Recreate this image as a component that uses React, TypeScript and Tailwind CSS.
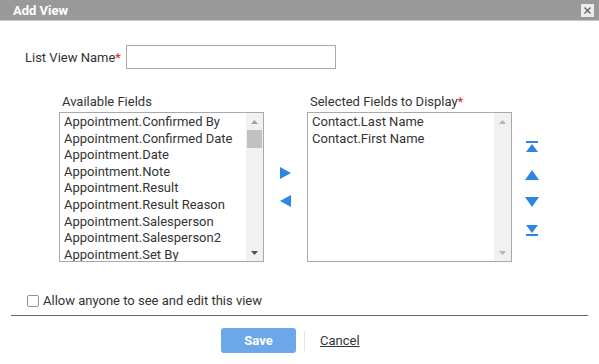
import React from "react";

const available = [
  "Appointment.Confirmed By",
  "Appointment.Confirmed Date",
  "Appointment.Date",
  "Appointment.Note",
  "Appointment.Result",
  "Appointment.Result Reason",
  "Appointment.Salesperson",
  "Appointment.Salesperson2",
  "Appointment.Set By",
];

const selected = ["Contact.Last Name", "Contact.First Name"];

function Tri({ dir, color }: { dir: "up" | "down"; color: string }) {
  return (
    <svg width="7" height="4" viewBox="0 0 7 4">
      {dir === "up" ? (
        <polygon points="0,4 7,4 3.5,0" fill={color} />
      ) : (
        <polygon points="0,0 7,0 3.5,4" fill={color} />
      )}
    </svg>
  );
}

function ListBox({
  items,
  thumb,
  upColor,
  downColor,
}: {
  items: string[];
  thumb: boolean;
  upColor: string;
  downColor: string;
}) {
  return (
    <div className="flex w-[205px] h-[150px] border border-[#a9a9a9] bg-white overflow-hidden">
      <div className="flex-1 pl-[4px] pt-[1px] overflow-hidden">
        {items.map((t) => (
          <div key={t} className="leading-[16.6px] whitespace-nowrap text-[13px] text-[#333]">
            {t}
          </div>
        ))}
      </div>
      <div className="w-[17px] h-full bg-[#f1f1f1] flex flex-col items-center">
        <div className="h-[17px] flex items-center justify-center">
          <Tri dir="up" color={upColor} />
        </div>
        {thumb ? <div className="w-[15px] h-[18px] bg-[#c1c1c1]" /> : null}
        <div className="flex-1" />
        <div className="h-[17px] flex items-center justify-center">
          <Tri dir="down" color={downColor} />
        </div>
      </div>
    </div>
  );
}

const BLUE = "#2e86de";

export default function App() {
  return (
    <div
      className="w-[599px] h-[364px] bg-white text-[13px] text-[#333] overflow-hidden"
      style={{ fontFamily: "Roboto, 'Liberation Sans', sans-serif" }}
    >
      {/* Title bar */}
      <div className="h-[21px] bg-[#999999] border-b border-[#c8c8c8] flex items-center justify-between pl-[13px] pr-[5px]">
        <span className="text-white font-bold text-[13px] leading-none">Add View</span>
        <div className="w-[13px] h-[13px] bg-[#ececec] flex items-center justify-center">
          <svg width="7" height="7" viewBox="0 0 7 7">
            <path d="M0.5 0.5 L6.5 6.5 M6.5 0.5 L0.5 6.5" stroke="#666" strokeWidth="1.4" />
          </svg>
        </div>
      </div>

      {/* Name row */}
      <div className="flex items-center pl-[25px] mt-[24px]">
        <span className="leading-none">
          List View Name<span className="text-[#e0261b]">*</span>
        </span>
        <div className="ml-[5px] w-[210px] h-[24px] border border-[#a9a9a9] bg-white" />
      </div>

      {/* Lists */}
      <div className="flex pl-[59px] mt-[25px]">
        <div className="flex flex-col">
          <div className="pl-[3px] h-[18px] leading-[16px]">Available Fields</div>
          <ListBox items={available} thumb upColor="#a3a3a3" downColor="#505050" />
        </div>
        <div className="w-[43px] flex flex-col items-center pt-[73px] gap-[16px]">
          <svg width="11" height="12" viewBox="0 0 11 12">
            <polygon points="0,0 11,6 0,12" fill={BLUE} />
          </svg>
          <svg width="11" height="12" viewBox="0 0 11 12">
            <polygon points="11,0 0,6 11,12" fill={BLUE} />
          </svg>
        </div>
        <div className="flex flex-col">
          <div className="pl-[3px] h-[18px] leading-[16px]">
            Selected Fields to Display<span className="text-[#e0261b]">*</span>
          </div>
          <ListBox items={selected} thumb={false} upColor="#b5b5b5" downColor="#b5b5b5" />
        </div>
        <div className="flex flex-col pl-[13px] pt-[47px] gap-[17px]">
          <svg width="14" height="11" viewBox="0 0 14 11">
            <rect x="1" y="0" width="12" height="2" fill={BLUE} />
            <polygon points="1,11 13,11 7,3" fill={BLUE} />
          </svg>
          <svg width="14" height="11" viewBox="0 0 14 11">
            <polygon points="0,11 14,11 7,1" fill={BLUE} />
          </svg>
          <svg width="14" height="11" viewBox="0 0 14 11">
            <polygon points="0,0 14,0 7,10" fill={BLUE} />
          </svg>
          <svg width="14" height="11" viewBox="0 0 14 11">
            <polygon points="1,0 13,0 7,8" fill={BLUE} />
            <rect x="1" y="9" width="12" height="2" fill={BLUE} />
          </svg>
        </div>
      </div>

      {/* Checkbox */}
      <div className="flex items-center pl-[27px] mt-[32px]">
        <div className="w-[12px] h-[12px] border border-[#8f8f8f] rounded-[2px] bg-white" />
        <span className="ml-[4px] leading-none">Allow anyone to see and edit this view</span>
      </div>

      {/* Divider */}
      <div className="mx-[11px] mt-[8px] h-[1px] bg-[#666]" />

      {/* Buttons */}
      <div className="flex items-center pl-[221px] mt-[12px]">
        <div className="w-[75px] h-[25px] rounded-[3px] bg-[#6ba7e9] flex items-center justify-center text-white font-bold">
          Save
        </div>
        <div className="ml-[8px] w-[1px] h-[20px] bg-[#e3e3e3]" />
        <span className="ml-[15px] underline text-[#333]">Cancel</span>
      </div>
    </div>
  );
}
